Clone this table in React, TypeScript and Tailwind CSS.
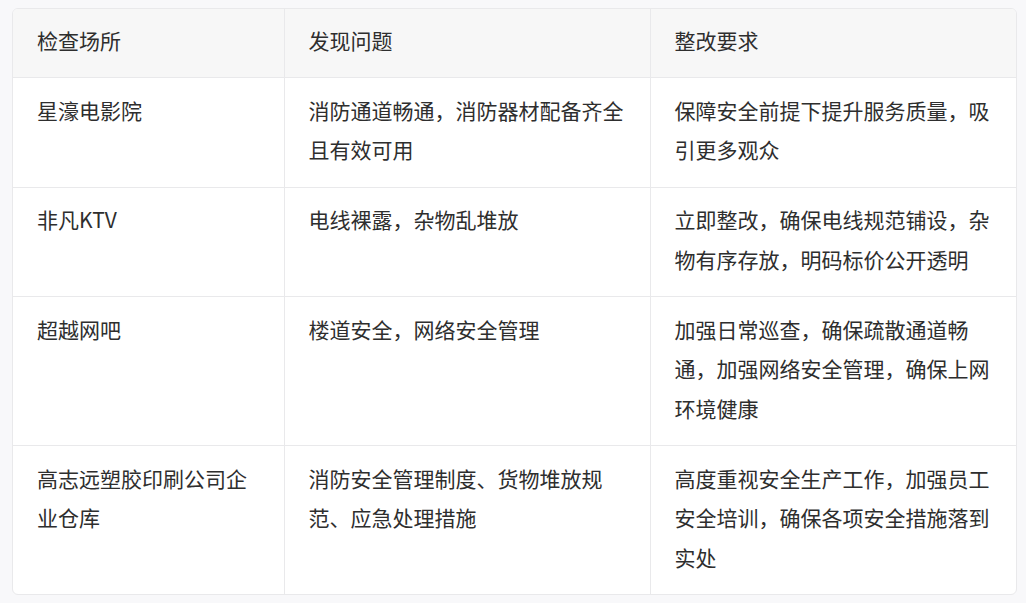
const rows: [string, string, string][] = [
  ["星濠电影院", "消防通道畅通，消防器材配备齐全且有效可用", "保障安全前提下提升服务质量，吸引更多观众"],
  ["非凡KTV", "电线裸露，杂物乱堆放", "立即整改，确保电线规范铺设，杂物有序存放，明码标价公开透明"],
  ["超越网吧", "楼道安全，网络安全管理", "加强日常巡查，确保疏散通道畅通，加强网络安全管理，确保上网环境健康"],
  ["高志远塑胶印刷公司企业仓库", "消防安全管理制度、货物堆放规范、应急处理措施", "高度重视安全生产工作，加强员工安全培训，确保各项安全措施落到实处"],
];

export default function App() {
  return (
    <div
      className="min-h-[603px] bg-[#f8f8fa] px-3 pt-2 pb-2"
      style={{ fontFamily: '"Noto Sans CJK SC", "Noto Sans", sans-serif' }}
    >
      <div className="w-[1005px] overflow-hidden rounded-md border border-[#e9e9eb] bg-white">
        <table className="w-full table-fixed border-collapse text-[21px] leading-[39.5px] text-[#2e2e2e]">
          <colgroup>
            <col className="w-[271px]" />
            <col className="w-[366px]" />
            <col />
          </colgroup>
          <thead>
            <tr className="bg-[#f7f7f7]">
              <th className="px-6 pt-[12px] pb-[16.5px] text-left font-normal">检查场所</th>
              <th className="border-l border-[#e9e9eb] px-6 pt-[12px] pb-[16.5px] text-left font-normal">发现问题</th>
              <th className="border-l border-[#e9e9eb] px-6 pt-[12px] pb-[16.5px] text-left font-normal">整改要求</th>
            </tr>
          </thead>
          <tbody>
            {rows.map((r) => (
              <tr key={r[0]} className="border-t border-[#e9e9eb] align-top">
                <td className="px-6 pt-[12.5px] pb-[17px]">{r[0]}</td>
                <td className="border-l border-[#e9e9eb] px-6 pt-[12.5px] pb-[17px]">{r[1]}</td>
                <td className="border-l border-[#e9e9eb] px-6 pt-[12.5px] pb-[17px]">{r[2]}</td>
              </tr>
            ))}
          </tbody>
        </table>
      </div>
    </div>
  );
}
